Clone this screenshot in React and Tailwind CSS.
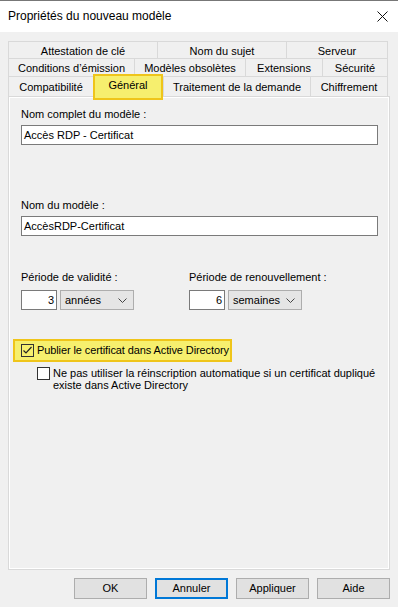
import React from 'react';

const font = { fontFamily: '"Liberation Sans", Arial, sans-serif' };

function Tab({ label, last, className = '' }) {
  return (
    <div
      className={`flex items-center justify-center whitespace-nowrap border-l border-t border-[#d9d9d9] bg-[#f0f0f0] pt-[2px] ${last ? 'border-r' : ''} ${className}`}
    >
      {label}
    </div>
  );
}

function Chevron() {
  return (
    <svg width="9" height="5" viewBox="0 0 9 5" className="text-[#444]">
      <polyline points="0.5,0.5 4.5,4.5 8.5,0.5" fill="none" stroke="currentColor" strokeWidth="1" />
    </svg>
  );
}

function Period({ value, unit }) {
  return (
    <div className="mt-[6px] flex gap-[3px]">
      <div className="flex h-[20px] w-[36px] items-center justify-end border border-[#7a7a7a] bg-white pr-[2px]">
        {value}
      </div>
      <div className="flex h-[20px] w-[74px] items-center justify-between border border-[#adadad] bg-[#e5e5e5] pl-[4px] pr-[6px]">
        <span>{unit}</span>
        <Chevron />
      </div>
    </div>
  );
}

function Check({ checked }) {
  return (
    <div className={`flex h-[13px] w-[13px] shrink-0 items-center justify-center border border-[#333] ${checked ? '' : 'bg-white'}`}>
      {checked && (
        <svg width="11" height="11" viewBox="0 0 11 11">
          <polyline points="1.5,5.5 4,8 9.5,2" fill="none" stroke="#222" strokeWidth="1.2" />
        </svg>
      )}
    </div>
  );
}

function Button({ children, focused }) {
  return (
    <div
      className={`flex h-[21px] w-[73px] items-center justify-center bg-[#e1e1e1] ${focused ? 'border-2 border-[#0078d7]' : 'border border-[#adadad]'}`}
    >
      {children}
    </div>
  );
}

export default function App() {
  return (
    <div className="h-[607px] w-[398px] overflow-hidden border-t border-[#777] bg-[#f0f0f0] text-[11px] leading-[13px] text-black" style={font}>
      {/* title bar */}
      <div className="flex h-[31px] items-center justify-between bg-white pl-[8px] pr-[10px]">
        <span className="text-[12px]">Propriétés du nouveau modèle</span>
        <svg width="11" height="11" viewBox="0 0 11 11">
          <path d="M0.5 0.5 L10.5 10.5 M10.5 0.5 L0.5 10.5" stroke="#111" strokeWidth="1" />
        </svg>
      </div>

      <div className="px-[8px] pt-[9px]">
        {/* tab rows */}
        <div className="flex h-[17px] w-[380px]">
          <Tab label="Attestation de clé" className="w-[149px]" />
          <Tab label="Nom du sujet" className="w-[129px]" />
          <Tab label="Serveur" className="w-[102px]" last />
        </div>
        <div className="flex h-[18px] w-[380px]">
          <Tab label="Conditions d’émission" className="w-[126px]" />
          <Tab label="Modèles obsolètes" className="w-[111px]" />
          <Tab label="Extensions" className="w-[77px]" />
          <Tab label="Sécurité" className="w-[66px]" last />
        </div>
        <div className="flex h-[20px] w-[380px] items-start">
          <Tab label="Compatibilité" className="h-[20px] w-[85px]" />
          <div className="relative z-10 -mb-[4px] -mt-[2px] flex h-[26px] w-[70px] justify-center border-2 border-[#efc51a] bg-[#f6ef6e] pt-[3px]">
            Général
          </div>
          <Tab label="Traitement de la demande" className="h-[20px] w-[147px]" />
          <Tab label="Chiffrement" className="h-[20px] w-[78px]" last />
        </div>

        {/* panel */}
        <div className="h-[474px] w-[382px] border border-[#d9d9d9] px-[12px] pt-[11px] shadow-[inset_1px_1px_0_#fff,inset_-1px_-1px_0_#fff]">
          <div>Nom complet du modèle :</div>
          <div className="mt-[4px] flex h-[20px] w-[357px] items-center border border-[#7a7a7a] bg-white pl-[2px]">
            Accès RDP - Certificat
          </div>

          <div className="mt-[54px]">Nom du modèle :</div>
          <div className="mt-[4px] flex h-[20px] w-[357px] items-center border border-[#7a7a7a] bg-white pl-[2px]">
            AccèsRDP-Certificat
          </div>

          <div className="mt-[35px] flex">
            <div className="w-[168px]">
              <div>Période de validité :</div>
              <Period value="3" unit="années" />
            </div>
            <div>
              <div>Période de renouvellement :</div>
              <Period value="6" unit="semaines" />
            </div>
          </div>

          <div className="-ml-[8px] mt-[29px] flex h-[23px] w-[219px] items-center gap-[3px] whitespace-nowrap border-2 border-[#efc51a] bg-[#f6ef6e] pl-[6px]">
            <Check checked />
            <span className="tracking-[-0.1px]">Publier le certificat dans Active Directory</span>
          </div>

          <div className="mt-[5px] flex gap-[3px] pl-[16px] leading-[12px]">
            <Check />
            <span>
              Ne pas utiliser la réinscription automatique si un certificat dupliqué
              <br />
              existe dans Active Directory
            </span>
          </div>
        </div>

        {/* buttons */}
        <div className="mt-[8px] flex justify-end gap-[8px]">
          <Button>OK</Button>
          <Button focused>Annuler</Button>
          <Button>Appliquer</Button>
          <Button>Aide</Button>
        </div>
      </div>
    </div>
  );
}
